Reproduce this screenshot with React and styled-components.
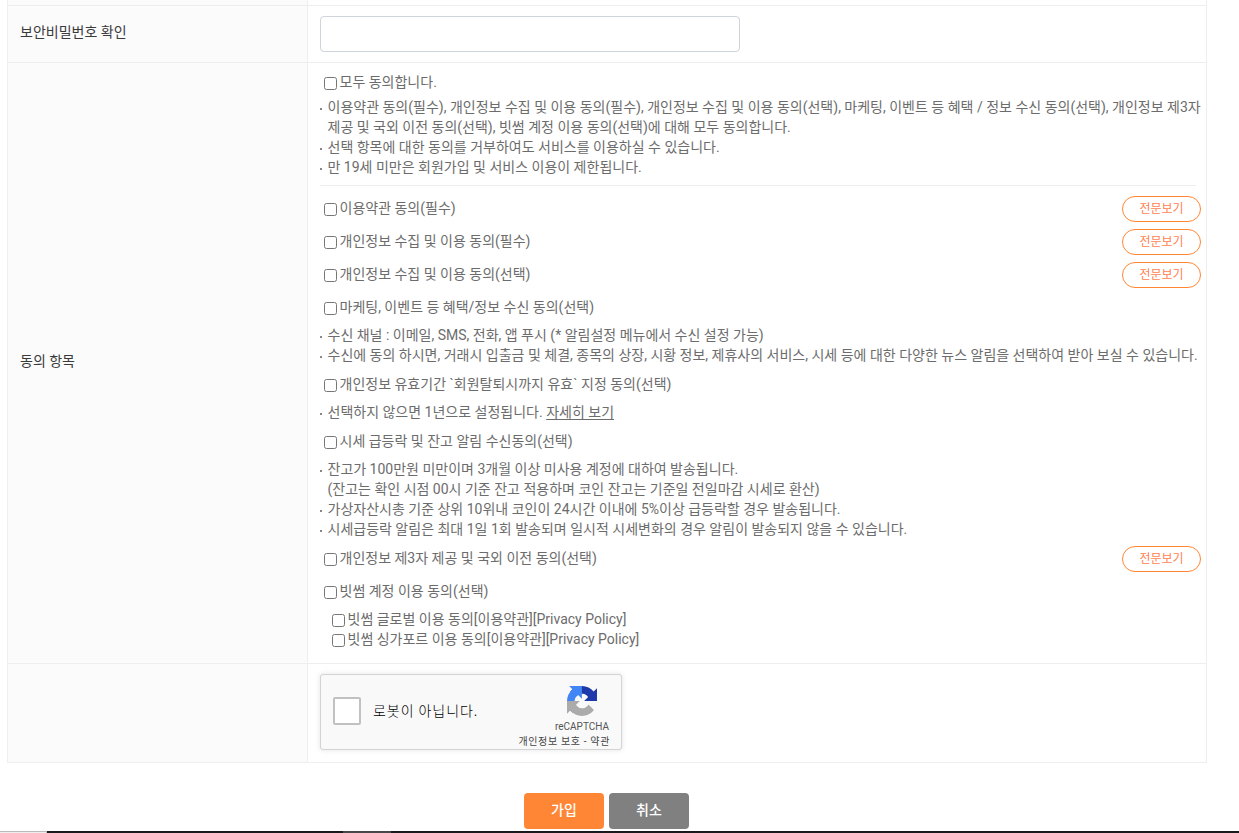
import styled, { createGlobalStyle } from "styled-components";

const GlobalStyle = createGlobalStyle`
  * {
    box-sizing: border-box;
  }

  body {
    margin: 0;
    background-color: #fff;
    color: #6c6c6c;
    font-family: Roboto, "Noto Sans CJK KR", sans-serif;
    font-size: 14px;
    line-height: 20px;
  }
`;

const PageDiv = styled.div`
  height: 833px;
  overflow: hidden;
  display: flex;
  flex-direction: column;
`;

const FormTable = styled.div`
  width: 1200px;
  margin-left: 7px;
  border: 1px solid #eee;
  border-top: 0;
`;

const FormRow = styled.div`
  display: grid;
  grid-template-columns: 300px 1fr;
  grid-template-rows: 100%;
  height: ${(props) => props.$height}px;

  & + & {
    border-top: 1px solid #eee;
  }
`;

const LabelDiv = styled.div`
  display: flex;
  align-items: center;
  padding: 0 12px 4px;
  background-color: #fbfbfb;
  border-right: 1px solid #eee;
  color: #3a3a3a;
`;

const ContentDiv = styled.div`
  padding: 9px 5px 0 12px;
`;

const PasswordInput = styled.input`
  display: block;
  width: 420px;
  height: 36px;
  margin-top: 1px;
  padding: 0 10px;
  border: 1px solid #ced4da;
  border-radius: 4px;
  outline: 0;
`;

const AgreeDiv = styled.div`
  display: flex;
  align-items: center;
  justify-content: space-between;
  height: 20px;
  margin-top: ${(props) => props.$top || 0}px;
  padding-left: ${(props) => props.$indent || 0}px;
`;

const AgreeLabel = styled.label`
  display: flex;
  align-items: center;
  white-space: nowrap;
`;

const Checkbox = styled.input`
  width: 13px;
  height: 13px;
  margin: 4px 2.5px 1px 4px;
`;

const ViewButton = styled.button`
  flex: none;
  width: 79px;
  height: 26px;
  margin-top: 2px;
  padding: 0 0 4px;
  background-color: #fff;
  border: 1px solid #ff8635;
  border-radius: 13px;
  color: #ff7f50;
  font-family: inherit;
  font-size: 12px;
`;

const NoticeUl = styled.ul`
  margin: ${(props) => props.$top}px -4px 0 0;
  padding: 0;
  list-style: none;
`;

const NoticeLi = styled.li`
  display: flex;
  word-break: break-all;

  &::before {
    content: "";
    flex: none;
    width: 2px;
    height: 2px;
    margin: 11px 5.5px 0 0;
    background-color: #888;
  }
`;

const DividerHr = styled.hr`
  height: 1px;
  margin: 8px 5px 12px 0;
  border: 0;
  background-color: #eee;
`;

const CaptchaDiv = styled.div`
  display: flex;
  align-items: center;
  width: 302px;
  height: 76px;
  margin-top: 1px;
  padding-left: 12px;
  background-color: #f9f9f9;
  border: 1px solid #d3d3d3;
  border-radius: 3px;
  box-shadow: 0 0 4px 1px rgba(0, 0, 0, 0.08);
  color: #000;
`;

const CaptchaBox = styled.div`
  width: 28px;
  height: 28px;
  margin-top: -2px;
  background-color: #fff;
  border: 2px solid #c1c1c1;
  border-radius: 2px;
`;

const CaptchaP = styled.p`
  flex: 1;
  margin: 0 0 4px 12px;
  font-weight: 300;
  font-family: "Noto Sans CJK KR", sans-serif;
  letter-spacing: 0.95px;
`;

const CaptchaLogoDiv = styled.div`
  display: flex;
  flex-direction: column;
  align-items: flex-end;
  align-self: stretch;
  padding: 11px 11px 0 0;
  color: #555;
  font-size: 10px;
  line-height: 14px;

  svg {
    margin-right: 13px;
  }
`;

const BrandSpan = styled.span`
  margin: 4px 1px 0 0;
  font-family: Roboto, sans-serif;
  line-height: 14px;
`;

const TermsSpan = styled.span`
  margin-top: 1px;
  color: #444;
  letter-spacing: 0.65px;
  white-space: nowrap;
`;

const ButtonsDiv = styled.div`
  display: flex;
  gap: 5px;
  margin: 30px 0 0 524px;
`;

const SubmitButton = styled.button`
  width: 80px;
  height: 36px;
  padding: 0 0 4px;
  background-color: ${(props) => props.$color};
  border: 0;
  border-radius: 4px;
  color: #fff;
  font-family: inherit;
  font-size: 14px;
  font-weight: 500;
`;

const BottomBar = styled.div`
  display: flex;
  flex: none;
  height: 2px;
  margin-top: auto;
  background-color: #1a1a1c;
`;

const BottomTab = styled.div`
  width: 47px;
  background-color: #eee;
  border-top: 1px solid #bbb;
  border-right: 1px solid #bbb;
`;

const BottomActive = styled.div`
  width: 48px;
  margin-left: 296px;
  background-color: #48484a;
`;

const DetailLink = styled.u`
  text-underline-offset: 2px;
`;

function Agree({ children, top, indent, view }) {
  return (
    <AgreeDiv $top={top} $indent={indent}>
      <AgreeLabel>
        <Checkbox type="checkbox" />
        {children}
      </AgreeLabel>
      {view && <ViewButton type="button">전문보기</ViewButton>}
    </AgreeDiv>
  );
}

function Notice({ items, top }) {
  return (
    <NoticeUl $top={top}>
      {items.map((item, index) => (
        <NoticeLi key={index}>
          <div>{item}</div>
        </NoticeLi>
      ))}
    </NoticeUl>
  );
}

function CaptchaLogo() {
  return (
    <svg width="30" height="30" viewBox="0 0 64 64">
      <path
        fill="#1c3aa9"
        d="M64 31.955l-.033-1.37V4.687l-7.16 7.16C50.948 4.674 42.033.093 32.05.093c-10.4 0-19.622 4.96-25.458 12.64l11.736 11.86a15.55 15.55 0 0 1 4.754-5.334c2.05-1.6 4.952-2.906 8.968-2.906.485 0 .86.057 1.135.163 4.976.393 9.288 3.14 11.828 7.124l-8.307 8.307L64 31.953"
      />
      <path
        fill="#4285f4"
        d="M31.862.094l-1.37.033H4.594l7.16 7.16C4.58 13.147 0 22.06 0 32.046c0 10.4 4.96 19.622 12.64 25.458L24.5 45.768a15.55 15.55 0 0 1-5.334-4.754c-1.6-2.05-2.906-4.952-2.906-8.968 0-.485.057-.86.163-1.135.393-4.976 3.14-9.288 7.124-11.828l8.307 8.307L31.86.095"
      />
      <path
        fill="#ababab"
        d="M.001 32.045l.033 1.37v25.898l7.16-7.16c5.86 7.173 14.774 11.754 24.76 11.754 10.4 0 19.622-4.96 25.458-12.64l-11.736-11.86a15.55 15.55 0 0 1-4.754 5.334c-2.05 1.6-4.952 2.906-8.968 2.906-.485 0-.86-.057-1.135-.163-4.976-.393-9.288-3.14-11.828-7.124l8.307-8.307c-10.522.04-22.4.066-27.295-.005"
      />
    </svg>
  );
}

export default function App() {
  return (
    <PageDiv>
      <GlobalStyle />
      <FormTable>
        <FormRow $height={5}>
          <LabelDiv />
        </FormRow>
        <FormRow $height={57}>
          <LabelDiv>보안비밀번호 확인</LabelDiv>
          <ContentDiv>
            <PasswordInput type="password" />
          </ContentDiv>
        </FormRow>
        <FormRow $height={601}>
          <LabelDiv>동의 항목</LabelDiv>
          <ContentDiv>
            <Agree>모두 동의합니다.</Agree>
            <Notice
              top={5}
              items={[
                "이용약관 동의(필수), 개인정보 수집 및 이용 동의(필수), 개인정보 수집 및 이용 동의(선택), 마케팅, 이벤트 등 혜택 / 정보 수신 동의(선택), 개인정보 제3자 제공 및 국외 이전 동의(선택), 빗썸 계정 이용 동의(선택)에 대해 모두 동의합니다.",
                "선택 항목에 대한 동의를 거부하여도 서비스를 이용하실 수 있습니다.",
                "만 19세 미만은 회원가입 및 서비스 이용이 제한됩니다.",
              ]}
            />
            <DividerHr />
            <Agree view>이용약관 동의(필수)</Agree>
            <Agree top={13} view>
              개인정보 수집 및 이용 동의(필수)
            </Agree>
            <Agree top={13} view>
              개인정보 수집 및 이용 동의(선택)
            </Agree>
            <Agree top={13}>마케팅, 이벤트 등 혜택/정보 수신 동의(선택)</Agree>
            <Notice
              top={8}
              items={[
                "수신 채널 : 이메일, SMS, 전화, 앱 푸시 (* 알림설정 메뉴에서 수신 설정 가능)",
                "수신에 동의 하시면, 거래시 입출금 및 체결, 종목의 상장, 시황 정보, 제휴사의 서비스, 시세 등에 대한 다양한 뉴스 알림을 선택하여 받아 보실 수 있습니다.",
              ]}
            />
            <Agree top={9}>
              개인정보 유효기간 `회원탈퇴시까지 유효` 지정 동의(선택)
            </Agree>
            <Notice
              top={8}
              items={[
                <>
                  선택하지 않으면 1년으로 설정됩니다.{" "}
                  <DetailLink>자세히 보기</DetailLink>
                </>,
              ]}
            />
            <Agree top={9}>시세 급등락 및 잔고 알림 수신동의(선택)</Agree>
            <Notice
              top={8}
              items={[
                <>
                  잔고가 100만원 미만이며 3개월 이상 미사용 계정에 대하여
                  발송됩니다.
                  <br />
                  (잔고는 확인 시점 00시 기준 잔고 적용하며 코인 잔고는 기준일
                  전일마감 시세로 환산)
                </>,
                "가상자산시총 기준 상위 10위내 코인이 24시간 이내에 5%이상 급등락할 경우 발송됩니다.",
                "시세급등락 알림은 최대 1일 1회 발송되며 일시적 시세변화의 경우 알림이 발송되지 않을 수 있습니다.",
              ]}
            />
            <Agree top={9} view>
              개인정보 제3자 제공 및 국외 이전 동의(선택)
            </Agree>
            <Agree top={13}>빗썸 계정 이용 동의(선택)</Agree>
            <Agree top={8} indent={8}>
              빗썸 글로벌 이용 동의[이용약관][Privacy Policy]
            </Agree>
            <Agree indent={8}>
              빗썸 싱가포르 이용 동의[이용약관][Privacy Policy]
            </Agree>
          </ContentDiv>
        </FormRow>
        <FormRow $height={99}>
          <LabelDiv />
          <ContentDiv>
            <CaptchaDiv>
              <CaptchaBox />
              <CaptchaP>로봇이 아닙니다.</CaptchaP>
              <CaptchaLogoDiv>
                <CaptchaLogo />
                <BrandSpan>reCAPTCHA</BrandSpan>
                <TermsSpan>개인정보 보호 - 약관</TermsSpan>
              </CaptchaLogoDiv>
            </CaptchaDiv>
          </ContentDiv>
        </FormRow>
      </FormTable>
      <ButtonsDiv>
        <SubmitButton $color="#ff8635">가입</SubmitButton>
        <SubmitButton $color="#808080">취소</SubmitButton>
      </ButtonsDiv>
      <BottomBar>
        <BottomTab />
        <BottomActive />
      </BottomBar>
    </PageDiv>
  );
}
